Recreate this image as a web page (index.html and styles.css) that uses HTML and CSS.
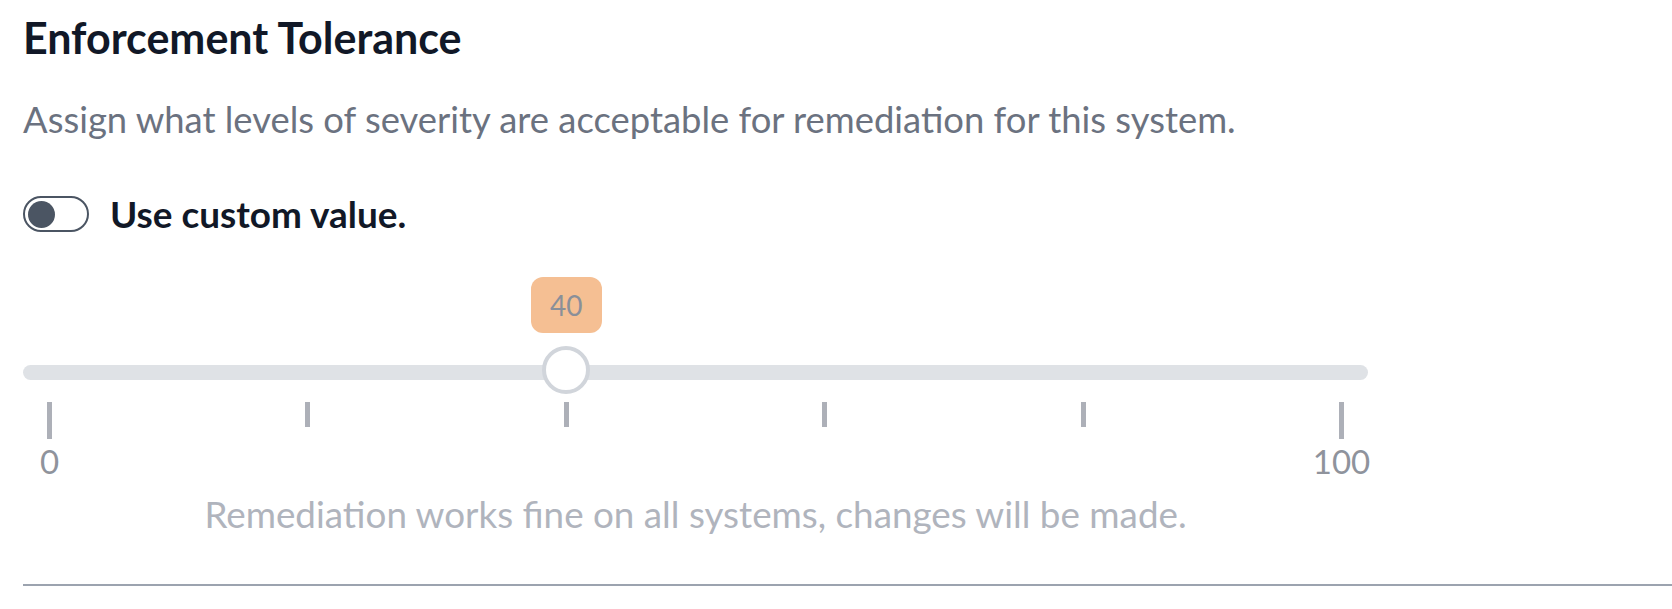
FILE: index.html
```html
<!DOCTYPE html>
<html lang="en">
<head>
    <meta charset="UTF-8">
    <meta name="viewport" content="width=device-width, initial-scale=1.0">
    <title>Enforcement Tolerance</title>
    <link rel="stylesheet" href="styles.css">
</head>
<body>
    <div class="section">
        <h2 class="section-title">Enforcement Tolerance</h2>
        <p class="section-desc">Assign what levels of severity are acceptable for remediation for this system.</p>

        <label class="toggle-row">
            <span class="toggle"><span class="toggle-knob"></span></span>
            <span class="toggle-label">Use custom value.</span>
        </label>

        <div class="slider">
            <!-- 값 말풍선과 손잡이는 트랙 위에 겹쳐서 표시 -->
            <div class="slider-badge" style="left: calc(24px + (100% - 48px) * 0.4)">40</div>
            <div class="slider-track"></div>
            <div class="slider-thumb" style="left: calc((100% - 48px) * 0.4)"></div>

            <div class="slider-marks">
                <div class="mark"><div class="tick-box"><span class="tick tick-long"></span></div><span class="mark-label">0</span></div>
                <div class="mark"><div class="tick-box"><span class="tick"></span></div></div>
                <div class="mark"><div class="tick-box"><span class="tick"></span></div></div>
                <div class="mark"><div class="tick-box"><span class="tick"></span></div></div>
                <div class="mark"><div class="tick-box"><span class="tick"></span></div></div>
                <div class="mark"><div class="tick-box"><span class="tick tick-long"></span></div><span class="mark-label">100</span></div>
            </div>

            <p class="slider-hint">Remediation works fine on all systems, changes will be made.</p>
        </div>

        <hr class="divider">
    </div>
</body>
</html>
```

FILE: styles.css
```css
* {
    box-sizing: border-box;
}
body {
    margin: 0;
    background: #fff;
    font-family: Lato, "Liberation Sans", sans-serif;
    overflow: hidden;
}
.section {
    padding: 12px 0 0 23px;
}
.section-title {
    margin: 0;
    font-size: 43px;
    line-height: 1.2;
    font-weight: 700;
    color: #111827;
}
.section-desc {
    margin: 34px 0 0;
    font-size: 36.4px;
    line-height: 1.2;
    color: #6b7280;
}
.toggle-row {
    display: flex;
    align-items: center;
    gap: 21px;
    margin-top: 51px;
}
.toggle {
    width: 66px;
    height: 36px;
    border: 2px solid #4b5563;
    border-radius: 18px;
    display: flex;
    align-items: center;
    padding-left: 3px;
}
.toggle-knob {
    width: 27px;
    height: 27px;
    border-radius: 50%;
    background: #4b5563;
}
.toggle-label {
    font-size: 36.9px;
    line-height: 1.2;
    font-weight: 700;
    color: #111827;
}
.slider {
    position: relative;
    width: 1345px;
    margin-top: 40px;
    padding-top: 88px;
}
.slider-badge {
    position: absolute;
    top: 0;
    width: 71px;
    height: 56px;
    margin-left: -35px;
    border-radius: 12px;
    background: #f5bf93;
    color: #8a8f99;
    font-size: 28px;
    display: flex;
    align-items: center;
    justify-content: center;
}
.slider-track {
    height: 15px;
    border-radius: 8px;
    background: #dfe2e6;
}
.slider-thumb {
    position: absolute;
    top: 69px;
    width: 48px;
    height: 48px;
    border-radius: 50%;
    background: #fff;
    border: 4px solid #d1d5db;
}
.slider-marks {
    display: flex;
    justify-content: space-between;
    padding: 0 24px;
    margin-top: 22px;
}
.mark {
    width: 5px;
    display: flex;
    flex-direction: column;
    align-items: center;
}
.tick-box {
    height: 37px;
}
.tick {
    display: block;
    width: 5px;
    height: 25px;
    background: #adb0b8;
}
.tick-long {
    height: 37px;
}
.mark-label {
    margin-top: 3px;
    font-size: 33px;
    line-height: 1.2;
    color: #8f939c;
    white-space: nowrap;
}
.slider-hint {
    margin: 11px 0 0;
    text-align: center;
    font-size: 36.8px;
    line-height: 1.2;
    color: #b0b4bd;
}
.divider {
    margin: 48px 0 0;
    border: 0;
    height: 2px;
    background: #9ca3af;
}
```
